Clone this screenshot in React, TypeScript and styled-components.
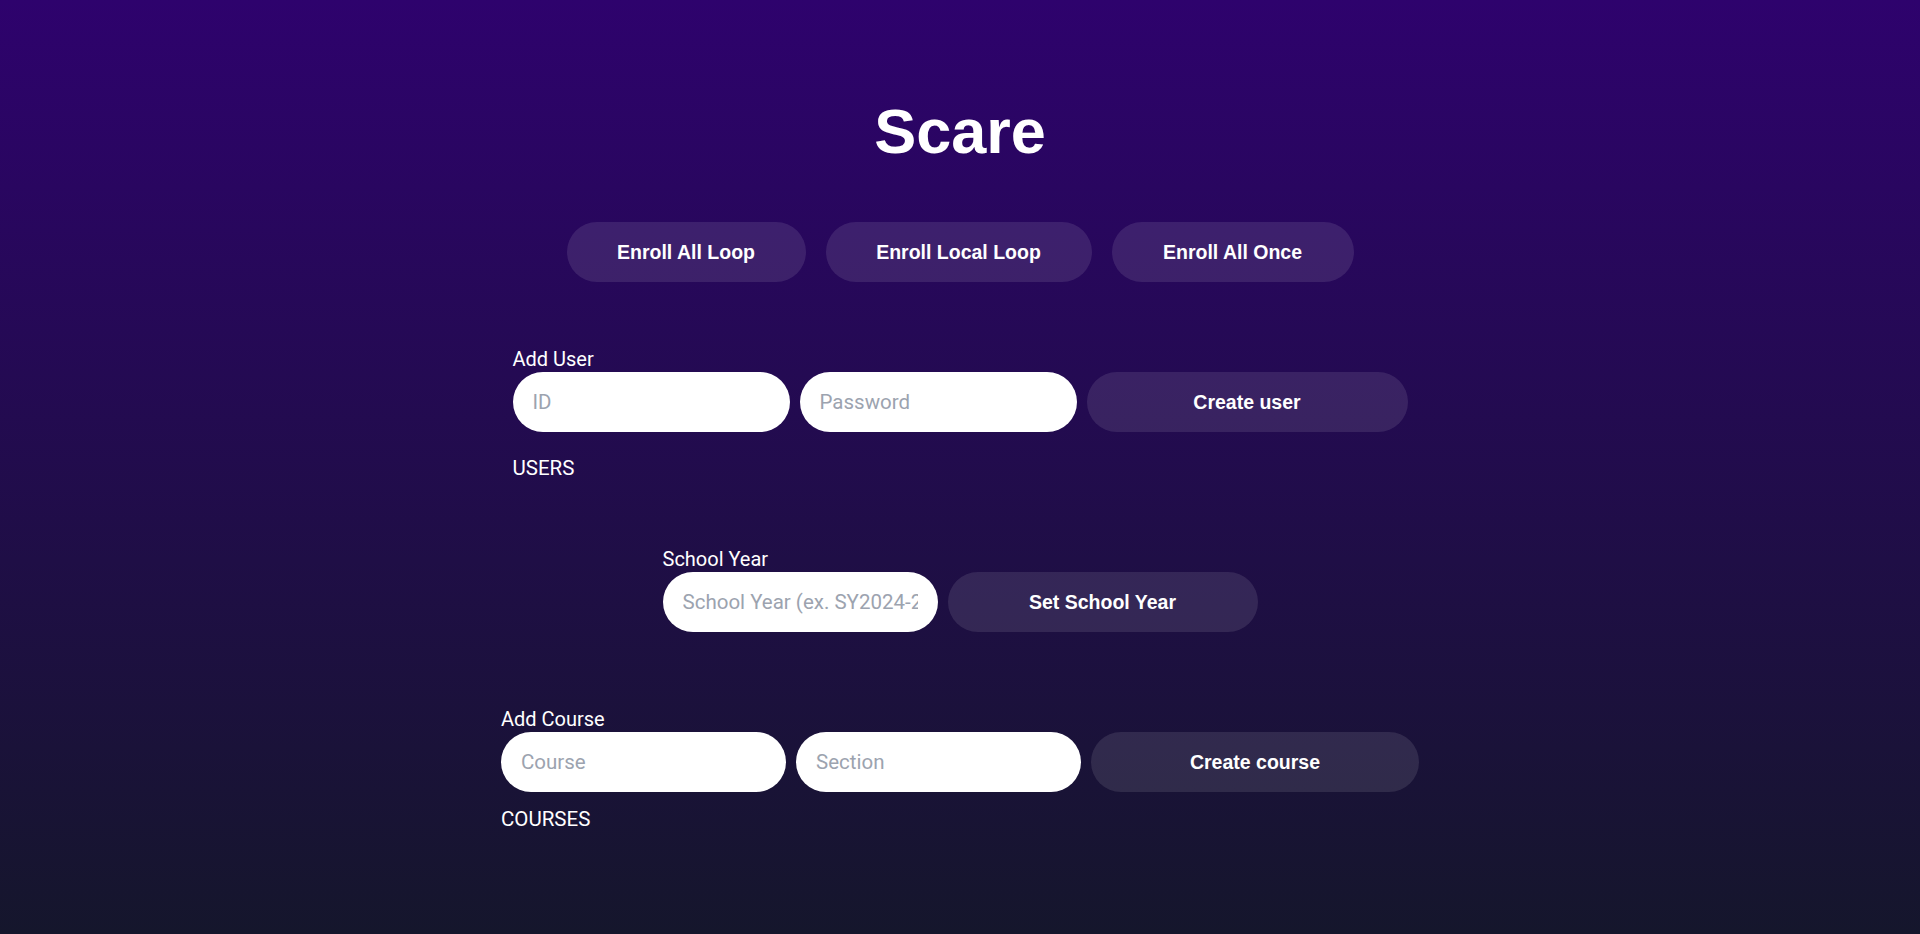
import styled, { createGlobalStyle } from "styled-components";

const GlobalStyle = createGlobalStyle`
  * {
    box-sizing: border-box;
  }
  body {
    margin: 0;
    font-family: Roboto, "Liberation Sans", Arial, sans-serif;
    color: #ffffff;
  }
`;

const Page = styled.main`
  min-height: 100vh;
  background: linear-gradient(to bottom, #2e026d, #15162c);
  display: flex;
  flex-direction: column;
  align-items: center;
  padding-top: 100px;
`;

const Title = styled.h1`
  margin: 0;
  font-family: "Liberation Sans", Arial, sans-serif;
  font-size: 63px;
  line-height: 63px;
  font-weight: 700;
`;

const ActionRow = styled.div`
  display: flex;
  gap: 20px;
  margin-top: 59px;
`;

const PillButton = styled.button<{ width?: number }>`
  height: 60px;
  width: ${(p) => (p.width ? `${p.width}px` : "auto")};
  padding: 0 40px;
  border: none;
  border-radius: 9999px;
  background: rgba(255, 255, 255, 0.1);
  color: #ffffff;
  font-family: "Liberation Sans", Arial, sans-serif;
  font-size: 19.5px;
  font-weight: 700;
  white-space: nowrap;
  cursor: pointer;
  flex-shrink: 0;
`;

const Form = styled.section<{ top: number }>`
  display: flex;
  flex-direction: column;
  margin-top: ${(p) => p.top}px;
`;

const Label = styled.div`
  font-size: 20px;
  line-height: 25px;
  height: 25px;
`;

const FieldRow = styled.div`
  display: flex;
  gap: 10px;
`;

const TextInput = styled.input<{ width: number }>`
  width: ${(p) => p.width}px;
  height: 60px;
  padding: 0 20px;
  border: none;
  border-radius: 9999px;
  background: #ffffff;
  color: #111827;
  font-family: Roboto, "Liberation Sans", Arial, sans-serif;
  font-size: 20.5px;
  outline: none;

  &::placeholder {
    color: #9ca3af;
  }
`;

const ListHeading = styled.div<{ top: number }>`
  margin-top: ${(p) => p.top}px;
  font-size: 20.5px;
  line-height: 25px;
`;

export default function App() {
  return (
    <>
      <GlobalStyle />
      <Page>
        <Title>Scare</Title>

        <ActionRow>
          <PillButton width={239}>Enroll All Loop</PillButton>
          <PillButton width={266}>Enroll Local Loop</PillButton>
          <PillButton width={242}>Enroll All Once</PillButton>
        </ActionRow>

        <Form top={65}>
          <Label>Add User</Label>
          <FieldRow>
            <TextInput width={277} placeholder="ID" />
            <TextInput width={277} placeholder="Password" type="password" />
            <PillButton width={321}>Create user</PillButton>
          </FieldRow>
          <ListHeading top={24}>USERS</ListHeading>
        </Form>

        <Form top={66}>
          <Label>School Year</Label>
          <FieldRow>
            <TextInput width={275} placeholder="School Year (ex. SY2024-2025)" />
            <PillButton width={310}>Set School Year</PillButton>
          </FieldRow>
        </Form>

        <Form top={75}>
          <Label>Add Course</Label>
          <FieldRow>
            <TextInput width={285} placeholder="Course" />
            <TextInput width={285} placeholder="Section" />
            <PillButton width={328}>Create course</PillButton>
          </FieldRow>
          <ListHeading top={15}>COURSES</ListHeading>
        </Form>
      </Page>
    </>
  );
}
